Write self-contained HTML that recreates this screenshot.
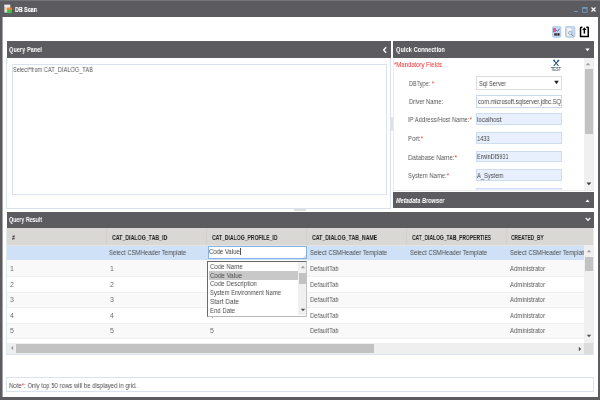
<!DOCTYPE html>
<html><head><meta charset="utf-8"><title>DB Scan</title>
<style>
html,body{margin:0;padding:0;width:600px;height:400px;overflow:hidden;background:#5c5c60;}
.b{position:absolute;}
.t{position:absolute;white-space:nowrap;font-family:"Liberation Sans", sans-serif;line-height:1;transform-origin:0 0;will-change:transform;}
</style></head><body>
<div class="b" style="left:0px;top:0px;width:600px;height:400px;background:#5c5c60;"></div>
<div class="b" style="left:0px;top:0px;width:600px;height:1px;background:#757577;"></div>
<div class="b" style="left:2px;top:17.3px;width:596px;height:379.7px;background:#ffffff;"></div>
<div class="b" style="left:2px;top:17.3px;width:1px;height:379.7px;background:#a4a4a8;"></div>
<svg class="b" style="left:4px;top:4px" width="9" height="10" viewBox="0 0 9 10">
<rect x="0.4" y="0.8" width="5.8" height="7.8" fill="#e2e2e2"/>
<rect x="0.4" y="0.8" width="5.8" height="1.5" fill="#f0f0f0"/>
<rect x="2.6" y="3.5" width="5.4" height="3" rx="1.2" fill="#ee8a2e"/>
<rect x="3" y="5.7" width="5" height="3.5" rx="1.6" fill="#3cc43c"/>
</svg>
<span class="t" id="t0" style="left:15px;top:6.07px;font-size:7px;font-weight:bold;font-style:normal;color:#ffffff;transform:scaleX(0.7640);-webkit-text-stroke:0.12px #ffffff;">DB Scan</span>
<div class="b" style="left:573.8px;top:11.2px;width:4.2px;height:1.1px;background:#7498c0;"></div>
<svg class="b" style="left:582px;top:7px" width="6" height="6" viewBox="0 0 6 6">
<rect x="0.45" y="0.45" width="4.6" height="4.8" fill="none" stroke="#7498c0" stroke-width="0.9"/>
<rect x="0.45" y="0.45" width="4.6" height="1.4" fill="#7498c0"/>
</svg>
<svg class="b" style="left:590.5px;top:7.2px" width="5" height="5" viewBox="0 0 5 5">
<path d="M0.5 0.5 L4.5 4.5 M4.5 0.5 L0.5 4.5" stroke="#ffffff" stroke-width="1.2"/>
</svg>
<svg class="b" style="left:551.5px;top:26px" width="10" height="12" viewBox="0 0 10 12">
<rect x="0.5" y="0.3" width="8.4" height="11" rx="1.6" fill="#c8dbf3" stroke="#a8c4ea" stroke-width="0.8"/>
<rect x="1" y="2" width="3" height="4.2" fill="#f05a7e"/>
<path d="M4.3 4.3 L5.3 5.2 L7.6 3" fill="none" stroke="#2a5fc4" stroke-width="1"/>
<rect x="2.3" y="7.2" width="1.5" height="2.5" fill="#1e1e1e"/>
<rect x="4.2" y="7.2" width="1.4" height="2.5" fill="#1e1e1e"/>
<rect x="6" y="7.2" width="1.5" height="2.5" fill="#1e1e1e"/>
</svg>
<svg class="b" style="left:565px;top:26px" width="11" height="12" viewBox="0 0 11 12">
<rect x="0.5" y="0.3" width="9.4" height="11" rx="1.6" fill="#c8dbf3" stroke="#a8c4ea" stroke-width="0.8"/>
<path d="M1.8 1.8 H5.5 L7 3.3 V10 H1.8 Z" fill="#f7f7f7" stroke="#c4c4c4" stroke-width="0.5"/>
<circle cx="5.3" cy="6.9" r="1.8" fill="#d6e4f4" stroke="#8a98a8" stroke-width="0.7"/>
<path d="M6.6 8.3 L8.6 10.3" stroke="#707070" stroke-width="0.9"/>
</svg>
<svg class="b" style="left:579px;top:26px" width="11" height="12" viewBox="0 0 11 12">
<path d="M3.4 1.15 H2.3 Q1.55 1.15 1.55 1.9 V10.45 H9.25 V1.9 Q9.25 1.15 8.5 1.15 H7.3" fill="none" stroke="#000" stroke-width="1.5"/>
<path d="M3.1 3.9 L5.35 1.3 L7.6 3.9 Z" fill="#000"/>
<rect x="4.6" y="3.5" width="1.5" height="4.1" fill="#000"/>
</svg>
<div class="b" style="left:7px;top:41px;width:384px;height:16.8px;background:#5c5c60;"></div>
<span class="t" id="t1" style="left:9px;top:46.07px;font-size:7px;font-weight:bold;font-style:normal;color:#ffffff;transform:scaleX(0.8076);">Query Panel</span>
<svg class="b" style="left:382px;top:46px" width="6" height="8" viewBox="0 0 6 8">
<path d="M4.2 1.2 L1.6 4 L4.2 6.8" fill="none" stroke="#ffffff" stroke-width="1.3"/>
</svg>
<div class="b" style="left:6px;top:58px;width:385px;height:151px;border:1px solid #dae3ed;box-sizing:border-box;border-top:none;"></div>
<div class="b" style="left:12px;top:64px;width:375px;height:131px;border:1px solid #dae3ed;box-sizing:border-box;"></div>
<span class="t" id="t2" style="left:13px;top:66.27px;font-size:7px;font-weight:normal;font-style:normal;color:#585858;transform:scaleX(0.8086);">Select*from CAT_DIALOG_TAB</span>
<div class="b" style="left:393px;top:41px;width:201px;height:16.8px;background:#5c5c60;"></div>
<span class="t" id="t3" style="left:396px;top:46.07px;font-size:7px;font-weight:bold;font-style:normal;color:#ffffff;transform:scaleX(0.8179);">Quick Connection</span>
<svg class="b" style="left:585px;top:48px" width="5" height="4" viewBox="0 0 5 4">
<path d="M0.3 0.5 H4.7 L2.5 3.2 Z" fill="#ffffff"/>
</svg>
<div class="b" style="left:393px;top:58px;width:201px;height:133px;border:1px solid #ebebeb;box-sizing:border-box;border-top:none;"></div>
<span class="t" id="t4" style="left:394px;top:61.37px;font-size:7px;font-weight:normal;font-style:normal;color:#ee2a2a;transform:scaleX(0.8507);">*Mandatory Fields</span>
<svg class="b" style="left:552px;top:59px" width="8" height="8" viewBox="0 0 8 8">
<path d="M2.3 1.9 L6.5 6.9 M6.1 1.9 L1.8 6.9" stroke="#2d5a90" stroke-width="1.05"/>
<circle cx="2.1" cy="1.6" r="1.0" fill="#2d5a90"/>
<rect x="5.4" y="0.7" width="1.6" height="2.1" fill="#2d5a90" transform="rotate(40 6.2 1.75)"/>
</svg>
<span class="t" id="t5" style="left:551px;top:66.57px;font-size:5px;font-weight:bold;font-style:normal;color:#55637e;transform:scaleX(0.7667);">TEST</span>
<div class="b" style="left:584px;top:58px;width:9px;height:132px;background:#f0f0f0;"></div>
<div class="b" style="left:585px;top:69px;width:7.5px;height:65px;background:#c2c2c2;"></div>
<svg class="b" style="left:585px;top:62px" width="6" height="4" viewBox="0 0 6 4"><path d="M0.8 3.2 H5.2 L3 0.8 Z" fill="#a0a0a0"/></svg>
<svg class="b" style="left:585.5px;top:181.5px" width="6" height="4" viewBox="0 0 6 4"><path d="M0.5 0.6 H5.3 L2.9 3.2 Z" fill="#3a3a3a"/></svg>
<span class="t" id="t6" style="left:409px;top:80.27px;font-size:7px;font-weight:normal;font-style:normal;color:#585858;transform:scaleX(0.7929);">DBType: <span style="color:#ee2a2a">*</span></span>
<span class="t" id="t7" style="left:409px;top:98.07px;font-size:7px;font-weight:normal;font-style:normal;color:#585858;transform:scaleX(0.8246);">Driver Name:</span>
<span class="t" id="t8" style="left:408px;top:116.27px;font-size:7px;font-weight:normal;font-style:normal;color:#585858;transform:scaleX(0.8453);">IP Address/Host Name:<span style="color:#ee2a2a">*</span></span>
<span class="t" id="t9" style="left:408px;top:134.87px;font-size:7px;font-weight:normal;font-style:normal;color:#585858;transform:scaleX(0.8556);">Port:<span style="color:#ee2a2a">*</span></span>
<span class="t" id="t10" style="left:408px;top:153.57px;font-size:7px;font-weight:normal;font-style:normal;color:#585858;transform:scaleX(0.8866);">Database Name:<span style="color:#ee2a2a">*</span></span>
<span class="t" id="t11" style="left:408px;top:172.07px;font-size:7px;font-weight:normal;font-style:normal;color:#585858;transform:scaleX(0.8429);">System Name:<span style="color:#ee2a2a">*</span></span>
<div class="b" style="left:476px;top:76px;width:86px;height:14px;background:#ffffff;border:1px solid #dcdcdc;box-sizing:border-box;"></div>
<span class="t" id="t12" style="left:479px;top:79.57px;font-size:7px;font-weight:normal;font-style:normal;color:#484848;transform:scaleX(0.8260);">Sql Server</span>
<svg class="b" style="left:554px;top:80px" width="5" height="5" viewBox="0 0 5 5"><path d="M0.2 0.8 H4.8 L2.5 4.2 Z" fill="#222"/></svg>
<div class="b" style="left:476px;top:95px;width:86px;height:12.5px;background:#ffffff;border:1px solid #c9d9ee;box-sizing:border-box;"></div>
<div class="b" style="left:477px;top:96px;width:84px;height:10px;overflow:hidden"><div class="b" style="left:-477px;top:-96px"><span class="t" id="t13" style="left:477.5px;top:98.07px;font-size:7px;font-weight:normal;font-style:normal;color:#484848;transform:scaleX(0.8269);">com.microsoft.sqlserver.jdbc.SQ</span></div></div>
<div class="b" style="left:476px;top:113.3px;width:86px;height:11.8px;background:#e8f0fe;border:1px solid #cddcf0;box-sizing:border-box;"></div>
<span class="t" id="t14" style="left:477.2px;top:115.77px;font-size:7px;font-weight:normal;font-style:normal;color:#484848;transform:scaleX(0.8828);">localhost</span>
<div class="b" style="left:476px;top:132.3px;width:86px;height:11.8px;background:#e8f0fe;border:1px solid #cddcf0;box-sizing:border-box;"></div>
<span class="t" id="t15" style="left:477.2px;top:134.77px;font-size:7px;font-weight:normal;font-style:normal;color:#484848;transform:scaleX(0.8088);">1433</span>
<div class="b" style="left:476px;top:150.7px;width:86px;height:11.8px;background:#e8f0fe;border:1px solid #cddcf0;box-sizing:border-box;"></div>
<span class="t" id="t16" style="left:477.2px;top:153.17px;font-size:7px;font-weight:normal;font-style:normal;color:#484848;transform:scaleX(0.7835);">ErwinDI5931</span>
<div class="b" style="left:476px;top:169.3px;width:86px;height:11.8px;background:#e8f0fe;border:1px solid #cddcf0;box-sizing:border-box;"></div>
<span class="t" id="t17" style="left:477.2px;top:171.77px;font-size:7px;font-weight:normal;font-style:normal;color:#484848;transform:scaleX(0.8243);">A_System</span>
<div class="b" style="left:476px;top:187.5px;width:86px;height:11.8px;background:#e8f0fe;border:1px solid #cddcf0;box-sizing:border-box;"></div>
<div class="b" style="left:393px;top:190px;width:201px;height:2px;background:#ffffff;"></div>
<div class="b" style="left:393px;top:190px;width:201px;height:1px;background:#ebebeb;"></div>
<div class="b" style="left:393px;top:192px;width:201px;height:16px;background:#5c5c60;"></div>
<span class="t" id="t18" style="left:396px;top:196.57px;font-size:7px;font-weight:bold;font-style:italic;color:#ffffff;transform:scaleX(0.8044);">Metadata Browser</span>
<svg class="b" style="left:585px;top:199px" width="5" height="4" viewBox="0 0 5 4">
<path d="M0.5 3 H4.5 L2.5 0.4 Z" fill="#ffffff"/>
</svg>
<div class="b" style="left:294px;top:209px;width:12px;height:2px;background:#e0e0e0;"></div>
<div class="b" style="left:391px;top:117px;width:2px;height:14px;background:#e2e2e2;"></div>
<div class="b" style="left:7px;top:212px;width:587px;height:16px;background:#5c5c60;"></div>
<span class="t" id="t19" style="left:9px;top:216.27px;font-size:7px;font-weight:bold;font-style:normal;color:#ffffff;transform:scaleX(0.7573);">Query Result</span>
<svg class="b" style="left:585px;top:217px" width="6" height="5" viewBox="0 0 6 5">
<path d="M0.8 1 L3 3.4 L5.2 1" fill="none" stroke="#ffffff" stroke-width="1.2"/>
</svg>
<div class="b" style="left:7px;top:228px;width:587px;height:17px;background:#dad8d4;"></div>
<div class="b" style="left:7px;top:245px;width:587px;height:1px;background:#e4e4e4;"></div>
<div class="b" style="left:106px;top:229px;width:1px;height:16px;background:#d3d0cb;"></div>
<div class="b" style="left:206px;top:229px;width:1px;height:16px;background:#d3d0cb;"></div>
<div class="b" style="left:306px;top:229px;width:1px;height:16px;background:#d3d0cb;"></div>
<div class="b" style="left:406px;top:229px;width:1px;height:16px;background:#d3d0cb;"></div>
<div class="b" style="left:506px;top:229px;width:1px;height:16px;background:#d3d0cb;"></div>
<span class="t" id="t20" style="left:12px;top:234.27px;font-size:7px;font-weight:bold;font-style:normal;color:#222222;transform:scaleX(0.7680);">#</span>
<span class="t" id="t21" style="left:111.7px;top:234.27px;font-size:7px;font-weight:bold;font-style:normal;color:#222222;transform:scaleX(0.7509);">CAT_DIALOG_TAB_ID</span>
<span class="t" id="t22" style="left:212px;top:234.27px;font-size:7px;font-weight:bold;font-style:normal;color:#222222;transform:scaleX(0.7269);">CAT_DIALOG_PROFILE_ID</span>
<span class="t" id="t23" style="left:311.7px;top:234.27px;font-size:7px;font-weight:bold;font-style:normal;color:#222222;transform:scaleX(0.7484);">CAT_DIALOG_TAB_NAME</span>
<span class="t" id="t24" style="left:411.7px;top:234.27px;font-size:7px;font-weight:bold;font-style:normal;color:#222222;transform:scaleX(0.7068);">CAT_DIALOG_TAB_PROPERTIES</span>
<span class="t" id="t25" style="left:511px;top:234.27px;font-size:7px;font-weight:bold;font-style:normal;color:#222222;transform:scaleX(0.6967);">CREATED_BY</span>
<div class="b" style="left:7px;top:246px;width:577px;height:14px;background:#cfe1f7;"></div>
<div class="b" style="left:7px;top:245px;width:577px;height:15px;overflow:hidden"><div class="b" style="left:-7px;top:-245px"><span class="t" id="t26" style="left:109px;top:249.07px;font-size:7px;font-weight:normal;font-style:normal;color:#4c4c4c;transform:scaleX(0.8542);">Select CSMHeader Template</span></div></div>
<div class="b" style="left:7px;top:245px;width:577px;height:15px;overflow:hidden"><div class="b" style="left:-7px;top:-245px"><span class="t" id="t27" style="left:310px;top:249.07px;font-size:7px;font-weight:normal;font-style:normal;color:#4c4c4c;transform:scaleX(0.8542);">Select CSMHeader Template</span></div></div>
<div class="b" style="left:7px;top:245px;width:577px;height:15px;overflow:hidden"><div class="b" style="left:-7px;top:-245px"><span class="t" id="t28" style="left:410px;top:249.07px;font-size:7px;font-weight:normal;font-style:normal;color:#4c4c4c;transform:scaleX(0.8542);">Select CSMHeader Template</span></div></div>
<div class="b" style="left:7px;top:245px;width:577px;height:15px;overflow:hidden"><div class="b" style="left:-7px;top:-245px"><span class="t" id="t29" style="left:510px;top:249.07px;font-size:7px;font-weight:normal;font-style:normal;color:#4c4c4c;transform:scaleX(0.8542);">Select CSMHeader Template</span></div></div>
<div class="b" style="left:7px;top:260px;width:577px;height:16px;background:#f9f9f9;"></div>
<div class="b" style="left:7px;top:276px;width:577px;height:1px;background:#eef0f3;"></div>
<span class="t" id="t30" style="left:10px;top:265.07px;font-size:7px;font-weight:normal;font-style:normal;color:#6e6e6e;">1</span>
<span class="t" id="t31" style="left:110px;top:265.07px;font-size:7px;font-weight:normal;font-style:normal;color:#6e6e6e;">1</span>
<span class="t" id="t32" style="left:210px;top:265.07px;font-size:7px;font-weight:normal;font-style:normal;color:#6e6e6e;">1</span>
<span class="t" id="t33" style="left:310px;top:265.07px;font-size:7px;font-weight:normal;font-style:normal;color:#5c5c5c;transform:scaleX(0.8575);">DefaultTab</span>
<span class="t" id="t34" style="left:510px;top:265.07px;font-size:7px;font-weight:normal;font-style:normal;color:#5c5c5c;transform:scaleX(0.8488);">Administrator</span>
<div class="b" style="left:7px;top:292px;width:577px;height:1px;background:#eef0f3;"></div>
<span class="t" id="t35" style="left:10px;top:280.67px;font-size:7px;font-weight:normal;font-style:normal;color:#6e6e6e;">2</span>
<span class="t" id="t36" style="left:110px;top:280.67px;font-size:7px;font-weight:normal;font-style:normal;color:#6e6e6e;">2</span>
<span class="t" id="t37" style="left:210px;top:280.67px;font-size:7px;font-weight:normal;font-style:normal;color:#6e6e6e;">2</span>
<span class="t" id="t38" style="left:310px;top:280.67px;font-size:7px;font-weight:normal;font-style:normal;color:#5c5c5c;transform:scaleX(0.8575);">DefaultTab</span>
<span class="t" id="t39" style="left:510px;top:280.67px;font-size:7px;font-weight:normal;font-style:normal;color:#5c5c5c;transform:scaleX(0.8488);">Administrator</span>
<div class="b" style="left:7px;top:293px;width:577px;height:14px;background:#f9f9f9;"></div>
<div class="b" style="left:7px;top:307px;width:577px;height:1px;background:#eef0f3;"></div>
<span class="t" id="t40" style="left:10px;top:296.27px;font-size:7px;font-weight:normal;font-style:normal;color:#6e6e6e;">3</span>
<span class="t" id="t41" style="left:110px;top:296.27px;font-size:7px;font-weight:normal;font-style:normal;color:#6e6e6e;">3</span>
<span class="t" id="t42" style="left:210px;top:296.27px;font-size:7px;font-weight:normal;font-style:normal;color:#6e6e6e;">3</span>
<span class="t" id="t43" style="left:310px;top:296.27px;font-size:7px;font-weight:normal;font-style:normal;color:#5c5c5c;transform:scaleX(0.8575);">DefaultTab</span>
<span class="t" id="t44" style="left:510px;top:296.27px;font-size:7px;font-weight:normal;font-style:normal;color:#5c5c5c;transform:scaleX(0.8488);">Administrator</span>
<div class="b" style="left:7px;top:323px;width:577px;height:1px;background:#eef0f3;"></div>
<span class="t" id="t45" style="left:10px;top:311.87px;font-size:7px;font-weight:normal;font-style:normal;color:#6e6e6e;">4</span>
<span class="t" id="t46" style="left:110px;top:311.87px;font-size:7px;font-weight:normal;font-style:normal;color:#6e6e6e;">4</span>
<span class="t" id="t47" style="left:210px;top:311.87px;font-size:7px;font-weight:normal;font-style:normal;color:#6e6e6e;">4</span>
<span class="t" id="t48" style="left:310px;top:311.87px;font-size:7px;font-weight:normal;font-style:normal;color:#5c5c5c;transform:scaleX(0.8575);">DefaultTab</span>
<span class="t" id="t49" style="left:510px;top:311.87px;font-size:7px;font-weight:normal;font-style:normal;color:#5c5c5c;transform:scaleX(0.8488);">Administrator</span>
<div class="b" style="left:7px;top:324px;width:577px;height:14px;background:#f9f9f9;"></div>
<div class="b" style="left:7px;top:338px;width:577px;height:1px;background:#eef0f3;"></div>
<span class="t" id="t50" style="left:10px;top:327.27px;font-size:7px;font-weight:normal;font-style:normal;color:#6e6e6e;">5</span>
<span class="t" id="t51" style="left:110px;top:327.27px;font-size:7px;font-weight:normal;font-style:normal;color:#6e6e6e;">5</span>
<span class="t" id="t52" style="left:210px;top:327.27px;font-size:7px;font-weight:normal;font-style:normal;color:#6e6e6e;">5</span>
<span class="t" id="t53" style="left:310px;top:327.27px;font-size:7px;font-weight:normal;font-style:normal;color:#5c5c5c;transform:scaleX(0.8575);">DefaultTab</span>
<span class="t" id="t54" style="left:510px;top:327.27px;font-size:7px;font-weight:normal;font-style:normal;color:#5c5c5c;transform:scaleX(0.8488);">Administrator</span>
<div class="b" style="left:584px;top:245px;width:9.5px;height:98px;background:#f0f0f0;"></div>
<div class="b" style="left:585px;top:256.5px;width:7.5px;height:14.5px;background:#c2c2c2;"></div>
<svg class="b" style="left:586px;top:249.3px" width="6" height="4" viewBox="0 0 6 4"><path d="M0.8 3.2 H5.2 L3 0.8 Z" fill="#a0a0a0"/></svg>
<svg class="b" style="left:586px;top:334px" width="6" height="4" viewBox="0 0 6 4"><path d="M0.8 0.8 H5.2 L3 3.2 Z" fill="#505050"/></svg>
<div class="b" style="left:7px;top:343px;width:577px;height:11px;background:#efefef;"></div>
<div class="b" style="left:16px;top:343.7px;width:358px;height:9.5px;background:#c2c2c2;"></div>
<div class="b" style="left:584px;top:343px;width:9.5px;height:11px;background:#dcdcdc;"></div>
<svg class="b" style="left:9.5px;top:345px" width="4" height="6" viewBox="0 0 4 6"><path d="M3.2 0.8 V5.2 L0.8 3 Z" fill="#a0a0a0"/></svg>
<svg class="b" style="left:578px;top:346px" width="4" height="6" viewBox="0 0 4 6"><path d="M0.8 0.8 V5.2 L3.2 3 Z" fill="#505050"/></svg>
<div class="b" style="left:7px;top:354px;width:587px;height:1px;background:#dae3ed;"></div>
<div class="b" style="left:6px;top:228px;width:1px;height:127px;background:#e2e8ef;"></div>
<div class="b" style="left:593px;top:228px;width:1px;height:127px;background:#e6ebf0;"></div>
<div class="b" style="left:207.5px;top:246.3px;width:99.5px;height:13.2px;background:#ffffff;border:1px solid #86b3e6;box-sizing:border-box;"></div>
<span class="t" id="t55" style="left:208.5px;top:248.37px;font-size:7px;font-weight:normal;font-style:normal;color:#444444;transform:scaleX(0.8509);">Code Value</span>
<div class="b" style="left:240.4px;top:248px;width:0.6px;height:7px;background:#555;"></div>
<svg class="b" style="left:302px;top:254px" width="5" height="5" viewBox="0 0 5 5"><path d="M4.5 1 L1 4.5 M4.5 3 L3 4.5" stroke="#999" stroke-width="0.6"/></svg>
<div class="b" style="left:207.4px;top:261px;width:99.8px;height:55.8px;background:#ffffff;border:1px solid #6a6a6a;box-sizing:border-box;border-right-color:#c4c4c4;border-bottom-color:#b8b8b8;"></div>
<div class="b" style="left:208.5px;top:271px;width:89.5px;height:8.6px;background:#c8c8c8;"></div>
<span class="t" id="t56" style="left:209.5px;top:262.67px;font-size:7px;font-weight:normal;font-style:normal;color:#4c4c4c;transform:scaleX(0.8753);">Code Name</span>
<span class="t" id="t57" style="left:209.5px;top:271.67px;font-size:7px;font-weight:normal;font-style:normal;color:#4c4c4c;transform:scaleX(0.8870);">Code Value</span>
<span class="t" id="t58" style="left:209.5px;top:280.47px;font-size:7px;font-weight:normal;font-style:normal;color:#4c4c4c;transform:scaleX(0.8752);">Code Description</span>
<span class="t" id="t59" style="left:209.5px;top:289.47px;font-size:7px;font-weight:normal;font-style:normal;color:#4c4c4c;transform:scaleX(0.8333);">System Environment Name</span>
<span class="t" id="t60" style="left:209.5px;top:298.27px;font-size:7px;font-weight:normal;font-style:normal;color:#4c4c4c;transform:scaleX(0.9202);">Start Date</span>
<span class="t" id="t61" style="left:209.5px;top:306.87px;font-size:7px;font-weight:normal;font-style:normal;color:#4c4c4c;transform:scaleX(0.8565);">End Date</span>
<div class="b" style="left:298px;top:262px;width:8.4px;height:53px;background:#f0f0f0;"></div>
<div class="b" style="left:298.5px;top:273px;width:7.5px;height:10.6px;background:#c2c2c2;"></div>
<svg class="b" style="left:299.5px;top:265px" width="6" height="4" viewBox="0 0 6 4"><path d="M0.8 3.2 H5.2 L3 0.8 Z" fill="#a0a0a0"/></svg>
<svg class="b" style="left:299.5px;top:307.5px" width="6" height="4" viewBox="0 0 6 4"><path d="M0.8 0.8 H5.2 L3 3.2 Z" fill="#505050"/></svg>
<div class="b" style="left:6px;top:377.3px;width:588px;height:14.9px;background:#ffffff;border:1px solid #dae3ed;box-sizing:border-box;"></div>
<span class="t" id="t62" style="left:9px;top:381.57px;font-size:7px;font-weight:normal;font-style:normal;color:#4c4c4c;transform:scaleX(0.8543);">Note<span style="color:#ee2a2a">*</span>: Only top 50 rows will be displayed in grid.</span>
</body></html>
